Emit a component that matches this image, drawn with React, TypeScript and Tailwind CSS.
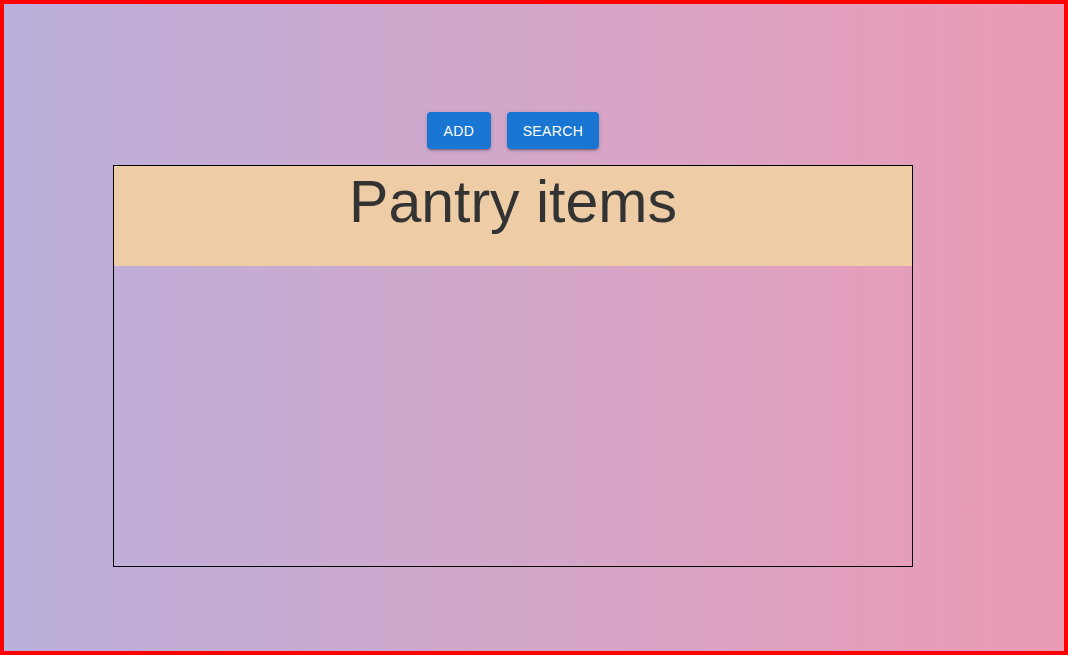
export default function App() {
  return (
    <div className="h-[655px] w-[1068px] border-4 border-[#ff0000] bg-gradient-to-r from-[#bab0dc] to-[#eb9bb5] font-['Liberation_Sans',Arial,sans-serif]">
      <div className="ml-[109px] w-[800px] pt-[108px]">
        <div className="flex justify-center gap-4">
          <button className="h-[37px] w-[64px] rounded bg-[#1976d2] text-sm uppercase tracking-[0.02857em] text-white shadow-[0_3px_1px_-2px_rgba(0,0,0,0.2),0_2px_2px_0_rgba(0,0,0,0.14),0_1px_5px_0_rgba(0,0,0,0.12)]">
            Add
          </button>
          <button className="h-[37px] w-[92px] rounded bg-[#1976d2] text-sm uppercase tracking-[0.02857em] text-white shadow-[0_3px_1px_-2px_rgba(0,0,0,0.2),0_2px_2px_0_rgba(0,0,0,0.14),0_1px_5px_0_rgba(0,0,0,0.12)]">
            Search
          </button>
        </div>

        <div className="mt-4 h-[402px] w-[800px] border border-black">
          <div className="h-[100px] bg-[#eecda6] pt-[2px] text-center">
            <h2 className="text-[59px] leading-[68px] text-[#333333]">
              Pantry items
            </h2>
          </div>
        </div>
      </div>
    </div>
  );
}
